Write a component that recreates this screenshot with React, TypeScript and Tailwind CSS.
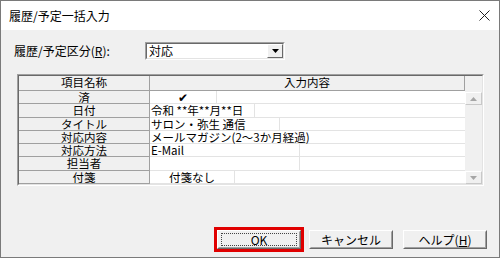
import { ReactNode } from 'react';

type Row = { label: string; value?: ReactNode; split?: string; center?: boolean; h: string };

const rows: Row[] = [
  { label: '済', value: '✔', split: 'w-[67px]', center: true, h: 'h-[13px]' },
  { label: '日付', value: '令和 **年**月**日', split: 'w-[105px]', h: 'h-[14px]' },
  { label: 'タイトル', value: 'サロン・弥生 通信', split: 'w-[130px]', h: 'h-[13px]' },
  { label: '対応内容', value: 'メールマガジン(2～3か月経過)', h: 'h-[13px]' },
  { label: '対応方法', value: 'E-Mail', split: 'w-[150px]', h: 'h-[13px]' },
  { label: '担当者', split: 'w-[150px]', h: 'h-[14px]' },
  { label: '付箋', value: '付箋なし', split: 'w-[85px]', center: true, h: 'h-[13px]' },
];

const Arrow = ({ up, color }: { up?: boolean; color: string }) => (
  <svg width="7" height="4" viewBox="0 0 7 4">
    <path d={up ? 'M0 4L3.5 0L7 4Z' : 'M0 0L7 0L3.5 4Z'} fill={color} />
  </svg>
);

function Btn({ children, focus }: { children: ReactNode; focus?: boolean }) {
  return (
    <div className="w-[84px] h-[19px] border border-t-white border-l-white border-r-[#696969] border-b-[#696969] bg-[#f0f0f0]">
      <div className="h-full border border-t-[#f0f0f0] border-l-[#f0f0f0] border-r-[#a0a0a0] border-b-[#a0a0a0] flex items-center justify-center">
        {focus ? (
          <div className="w-[76px] h-[13px] border border-dotted border-[#444] flex items-center justify-center">
            {children}
          </div>
        ) : (
          children
        )}
      </div>
    </div>
  );
}

function ScrollBtn({ up }: { up?: boolean }) {
  return (
    <div className="h-[13px] border border-t-white border-l-white border-r-[#c8c8c8] border-b-[#c8c8c8] bg-[#f0f0f0] flex items-center justify-center">
      <Arrow up={up} color="#a6a6a6" />
    </div>
  );
}

export default function App() {
  return (
    <div className="w-[500px] h-[260px] bg-white font-['Noto_Sans_CJK_JP','Noto_Sans',sans-serif] text-[12px] leading-none text-black">
      <div className="h-[258px] border border-[#7a7a7a] flex flex-col">
        {/* title bar */}
        <div className="h-[29px] shrink-0 bg-white flex items-center justify-between pl-[8px] pr-[9px]">
          <span>履歴/予定一括入力</span>
          <svg width="11" height="11" viewBox="0 0 11 11">
            <path d="M0.5 0.5L10.5 10.5M10.5 0.5L0.5 10.5" stroke="#222" strokeWidth="1" />
          </svg>
        </div>

        <div className="flex-1 bg-[#f0f0f0] flex flex-col">
          {/* kind selector */}
          <div className="flex items-center mt-[12px] pl-[13px]">
            <div className="w-[131px]">
              履歴/予定区分(<span className="underline">R</span>):
            </div>
            <div className="w-[140px] h-[18px] border border-t-[#a0a0a0] border-l-[#a0a0a0] border-r-white border-b-white">
              <div className="h-full border border-t-[#696969] border-l-[#696969] border-r-[#e3e3e3] border-b-[#e3e3e3] bg-white flex items-center">
                <span className="flex-1 pl-[2px]">対応</span>
                <div className="w-[16px] h-full border border-t-white border-l-white border-r-[#696969] border-b-[#696969] bg-[#f0f0f0] flex items-center justify-center">
                  <Arrow color="#000" />
                </div>
              </div>
            </div>
          </div>

          {/* grid */}
          <div className="mt-[14px] ml-[16px] w-[467px] h-[112px] border border-t-[#a0a0a0] border-l-[#a0a0a0] border-r-white border-b-white text-[11.5px]">
            <div className="h-full border border-t-[#696969] border-l-[#696969] border-r-[#e3e3e3] border-b-[#e3e3e3] flex">
              <div className="flex-1 flex flex-col">
                <div className="h-[15px] flex border-b border-[#a0a0a0] bg-[#f0f0f0]">
                  <div className="w-[131px] border-r border-[#a0a0a0] flex items-center justify-center">項目名称</div>
                  <div className="flex-1 border-r border-[#a0a0a0] flex items-center justify-center">入力内容</div>
                </div>
                {rows.map((r) => (
                  <div key={r.label} className={`${r.h} flex leading-[11px]`}>
                    <div className="w-[131px] bg-[#f0f0f0] border-r border-b border-[#a0a0a0] flex items-center justify-center">
                      {r.label}
                    </div>
                    <div className="flex-1 bg-white border-b border-[#e3e3e3] flex">
                      <div
                        className={`${r.split ?? 'w-[1px]'} h-full flex items-center whitespace-nowrap ${
                          r.split ? 'border-r border-[#e3e3e3]' : ''
                        } ${r.center ? 'justify-center' : 'pl-[1px]'}`}
                      >
                        {r.value}
                      </div>
                    </div>
                  </div>
                ))}
              </div>

              {/* scrollbar */}
              <div className="w-[17px] flex flex-col bg-[#f0f0f0]">
                <div className="h-[16px]" />
                <ScrollBtn up />
                <div className="flex-1" />
                <ScrollBtn />
              </div>
            </div>
          </div>

          {/* buttons */}
          <div className="mt-[41px] flex items-center justify-end pr-[12px]">
            <div className="w-[90px] h-[25px] border-[3px] border-[#e00000]">
              <Btn focus>OK</Btn>
            </div>
            <div className="ml-[5px]">
              <Btn>キャンセル</Btn>
            </div>
            <div className="ml-[10px]">
              <Btn>
                ヘルプ(<span className="underline">H</span>)
              </Btn>
            </div>
          </div>
        </div>
      </div>
    </div>
  );
}
